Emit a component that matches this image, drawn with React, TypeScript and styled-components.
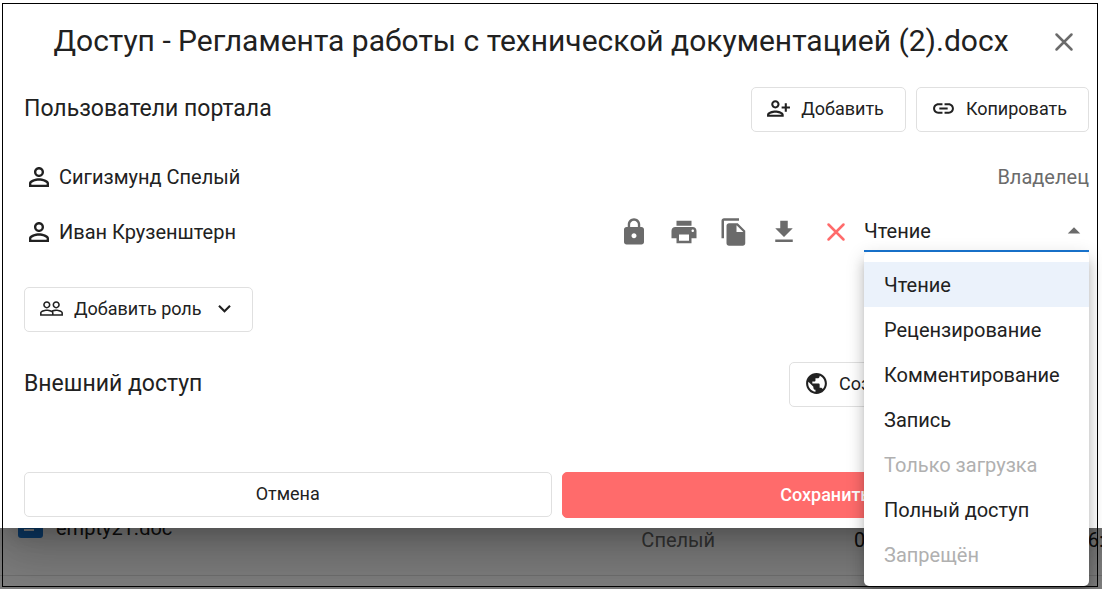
import React from "react";
import styled, { createGlobalStyle, css } from "styled-components";
import {
  MdPersonOutline,
  MdOutlinePersonAddAlt1,
  MdInsertLink,
  MdLock,
  MdPrint,
  MdFileCopy,
  MdGetApp,
  MdPeopleOutline,
  MdKeyboardArrowDown,
  MdPublic,
  MdArrowDropUp,
} from "react-icons/md";

const GlobalStyle = createGlobalStyle`
  *, *::before, *::after { box-sizing: border-box; }
  body { margin: 0; background: #fff; }
  body, button, input { font-family: Roboto, "Liberation Sans", sans-serif; }
`;

const ink = "#212121";
const line = "#e0e0e0";
const blue = "#1976d2";

const Screen = styled.div`
  position: relative;
  display: grid;
  grid-template-columns: minmax(0, 1fr);
  min-height: 100vh;
  overflow: hidden;
  color: ${ink};
  font-size: 20px;
  line-height: 30px;

  > * { grid-area: 1 / 1; }
`;

const Frame = styled.div`
  position: absolute;
  inset: 3px 4px 2px 2px;
  border: 1px solid #000;
  pointer-events: none;
`;

const FileList = styled.table`
  align-self: end;
  width: 100%;
  margin-bottom: 13px;
  border-collapse: collapse;
  table-layout: fixed;
  border-bottom: 1px solid ${line};

  td { height: 94px; padding: 0; white-space: nowrap; }
`;

const Column = styled.col<{ $width?: string }>`
  width: ${(p) => p.$width ?? "auto"};
`;

const FileName = styled.span`
  display: flex;
  align-items: center;
  gap: 13px;
  padding-left: 18px;
`;

const Owner = styled.td`
  color: #6b6b6b;
  vertical-align: bottom;
  && { padding-bottom: 20px; }
`;

const DateCell = styled(Owner)`
  color: ${ink};
`;

const Scrim = styled.div`
  background: rgba(0, 0, 0, 0.5);
`;

const Dialog = styled.section`
  position: relative;
  align-self: start;
  padding: 16px 13px 10px 24px;
  background: #fff;
  box-shadow: 0 14px 19px -9px rgba(0, 0, 0, 0.2), 0 30px 48px 4px rgba(0, 0, 0, 0.14),
    0 11px 58px 10px rgba(0, 0, 0, 0.12);
`;

const Header = styled.header`
  display: flex;
  align-items: center;
  height: 51px;
  padding-right: 10px;
`;

const Title = styled.h1`
  flex: 1;
  margin: 0;
  padding: 0 11px 2px 0;
  font-size: 30px;
  font-weight: 400;
  line-height: 40px;
  text-align: center;
  white-space: nowrap;
`;

const Row = styled.div<{ $top?: number; $height?: number }>`
  display: flex;
  align-items: center;
  justify-content: space-between;
  height: ${(p) => p.$height ?? 45}px;
  margin-top: ${(p) => p.$top ?? 0}px;
`;

const SectionTitle = styled.h2`
  margin: 0;
  padding-bottom: 2px;
  font-size: 23px;
  font-weight: 400;
  line-height: 30px;
`;

const Group = styled.div<{ $gap: number }>`
  display: flex;
  align-items: center;
  gap: ${(p) => p.$gap}px;
`;

const Footer = styled.footer`
  display: flex;
  align-items: flex-start;
  gap: 10px;
  margin-top: 65px;
`;

const Button = styled.button<{ $primary?: boolean; $wide?: boolean; $menu?: boolean; $minWidth?: number }>`
  display: flex;
  align-items: center;
  gap: 10px;
  height: 45px;
  min-width: ${(p) => p.$minWidth ?? 0}px;
  padding: 0 ${(p) => (p.$menu ? 15 : 21)}px 2px 14px;
  border: 1px solid ${line};
  border-radius: 5px;
  background: #fff;
  color: ${ink};
  font-size: 18px;
  white-space: nowrap;
  cursor: pointer;
  ${(p) => p.$wide && css`flex: 1; justify-content: center; padding: 0 0 2px;`}
  ${(p) => p.$primary && css`
    height: 46px;
    border-color: #ff6b6b;
    background: #ff6b6b;
    color: #fff;
    font-weight: 500;
  `}
`;

const IconButton = styled.button<{ $color?: string }>`
  display: flex;
  width: 30px;
  height: 30px;
  padding: 0;
  border: 0;
  background: none;
  color: ${(p) => p.$color ?? "#6b6b6b"};
  cursor: pointer;
`;

const Muted = styled.span`
  color: #6b6b6b;
`;

const SelectBox = styled.div`
  position: relative;
  width: 225px;
`;

const SelectButton = styled.button`
  display: flex;
  align-items: center;
  justify-content: space-between;
  width: 100%;
  height: 41px;
  padding: 0;
  border: 0;
  border-bottom: 2px solid ${blue};
  background: none;
  color: ${ink};
  font-size: 20px;
  text-align: left;

  svg { color: #6b6b6b; }
`;

const Menu = styled.ul`
  position: absolute;
  top: 41px;
  left: 0;
  z-index: 1;
  width: 100%;
  margin: 0;
  padding: 10px 0 9px;
  list-style: none;
  background: #fff;
  border-radius: 5px;
  box-shadow: 0 6px 6px -4px rgba(0, 0, 0, 0.2), 0 10px 12px 1px rgba(0, 0, 0, 0.14),
    0 4px 18px 2px rgba(0, 0, 0, 0.12);
`;

const Option = styled.button<{ $selected?: boolean }>`
  display: block;
  width: 100%;
  height: 45px;
  padding: 0 20px;
  border: 0;
  background: ${(p) => (p.$selected ? "#ebf2fb" : "#fff")};
  color: ${ink};
  font-size: 20px;
  text-align: left;
  white-space: nowrap;

  &:disabled { color: #b0b0b0; }
`;

const Cross = () => (
  <svg width="30" height="30" viewBox="0 0 30 30" fill="none" stroke="currentColor" strokeWidth="2.5" strokeLinecap="round" aria-hidden="true">
    <path d="M7.5 7.5l15 15M22.5 7.5l-15 15" />
  </svg>
);

const DocIcon = () => (
  <svg width="25" height="20" viewBox="0 0 25 20" aria-hidden="true">
    <rect width="25" height="20" rx="3" fill={blue} />
    <path d="M6 6h13M6 12h10" stroke="#fff" strokeWidth="2" />
  </svg>
);

const options = [
  { label: "Чтение", selected: true },
  { label: "Рецензирование" },
  { label: "Комментирование" },
  { label: "Запись" },
  { label: "Только загрузка", disabled: true },
  { label: "Полный доступ" },
  { label: "Запрещён", disabled: true },
];

const actions = [
  { label: "Заблокировать", Icon: MdLock },
  { label: "Печать", Icon: MdPrint },
  { label: "Копирование", Icon: MdFileCopy },
  { label: "Скачивание", Icon: MdGetApp },
];

const User = ({ name }: { name: string }) => (
  <Group $gap={5}>
    <MdPersonOutline size={30} />
    <span>{name}</span>
  </Group>
);

export default function App() {
  return (
    <Screen>
      <GlobalStyle />
      <FileList>
        <colgroup>
          <Column $width="58.2%" />
          <Column $width="19.3%" />
          <Column $width="20.2%" />
          <Column />
        </colgroup>
        <tbody>
          <tr>
            <td>
              <FileName>
                <DocIcon />
                empty21.doc
              </FileName>
            </td>
            <Owner>Спелый</Owner>
            <DateCell>06.09.2023</DateCell>
            <DateCell>16:44</DateCell>
          </tr>
        </tbody>
      </FileList>
      <Scrim />
      <Dialog role="dialog" aria-labelledby="share-title">
        <Header>
          <Title id="share-title">Доступ - Регламента работы с технической документацией (2).docx</Title>
          <IconButton aria-label="Закрыть">
            <Cross />
          </IconButton>
        </Header>

        <Row $top={20}>
          <SectionTitle>Пользователи портала</SectionTitle>
          <Group $gap={10}>
            <Button>
              <MdOutlinePersonAddAlt1 size={25} />
              Добавить
            </Button>
            <Button>
              <MdInsertLink size={25} />
              Копировать
            </Button>
          </Group>
        </Row>

        <Row $top={17} $height={55}>
          <User name="Сигизмунд Спелый" />
          <Muted>Владелец</Muted>
        </Row>
        <Row $height={55}>
          <User name="Иван Крузенштерн" />
          <Group $gap={13}>
            <Group $gap={22}>
              <Group $gap={20}>
                {actions.map(({ label, Icon }) => (
                  <IconButton key={label} aria-label={label}>
                    <Icon size={30} />
                  </IconButton>
                ))}
              </Group>
              <IconButton aria-label="Удалить" $color="#ff6b6b">
                <Cross />
              </IconButton>
            </Group>
            <SelectBox>
              <SelectButton aria-haspopup="listbox" aria-expanded="true">
                Чтение
                <MdArrowDropUp size={30} />
              </SelectButton>
              <Menu role="listbox" aria-label="Уровень доступа">
                {options.map((o) => (
                  <li key={o.label}>
                    <Option role="option" aria-selected={!!o.selected} $selected={o.selected} disabled={o.disabled}>
                      {o.label}
                    </Option>
                  </li>
                ))}
              </Menu>
            </SelectBox>
          </Group>
        </Row>

        <Row $top={28}>
          <Button $menu>
            <MdPeopleOutline size={25} />
            Добавить роль
            <MdKeyboardArrowDown size={25} />
          </Button>
        </Row>

        <Row $top={30}>
          <SectionTitle>Внешний доступ</SectionTitle>
          <Button $minWidth={300}>
            <MdPublic size={25} />
            Создать внешнюю ссылку
          </Button>
        </Row>

        <Footer>
          <Button $wide>Отмена</Button>
          <Button $wide $primary>
            Сохранить
          </Button>
        </Footer>
      </Dialog>
      <Frame />
    </Screen>
  );
}
